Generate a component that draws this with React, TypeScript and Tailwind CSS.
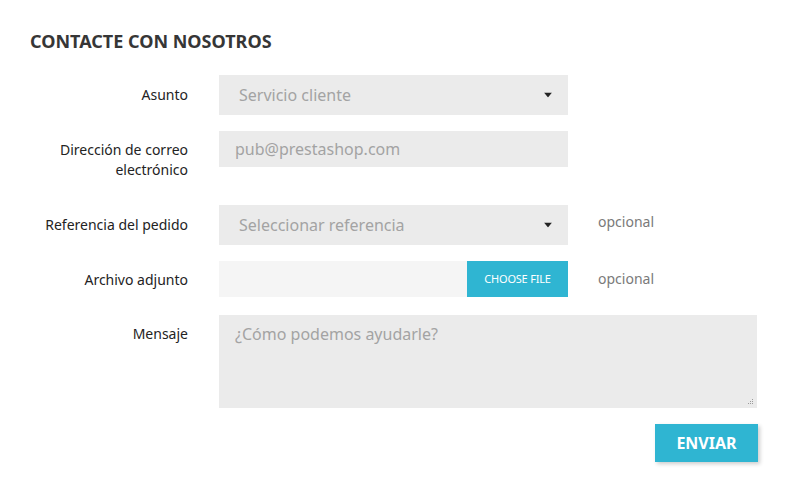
import React from "react";

function Caret() {
  return (
    <svg width="8" height="5" viewBox="0 0 8 5" className="pointer-events-none absolute right-[16px] top-1/2 -translate-y-1/2">
      <path d="M0 0h8L4 5z" fill="#232323" />
    </svg>
  );
}

function Label({ children }: { children: React.ReactNode }) {
  return (
    <label className="w-[158px] shrink-0 py-[9px] text-right text-sm leading-5 text-[#232323]">
      {children}
    </label>
  );
}

export default function App() {
  return (
    <div className="min-h-[493px] bg-white pt-[29px] pl-[30px] font-['Noto_Sans',sans-serif]">
      <h3 className="text-[18px] font-bold leading-6 text-[#363636]">CONTACTE CON NOSOTROS</h3>

      <form className="mt-[22px]">
        <div className="flex items-center gap-[31px]">
          <Label>Asunto</Label>
          <div className="relative w-[349px]">
            <select className="h-10 w-full appearance-none bg-[#ebebeb] pl-[20px] text-base text-[#a3a3a3] outline-none">
              <option>Servicio cliente</option>
            </select>
            <Caret />
          </div>
        </div>

        <div className="mt-4 flex items-start gap-[31px]">
          <Label>
            Dirección de correo
            <br />
            electrónico
          </Label>
          <input
            type="email"
            placeholder="pub@prestashop.com"
            className="h-9 w-[349px] bg-[#ebebeb] px-4 text-base text-[#232323] outline-none placeholder:text-[#a3a3a3]"
          />
        </div>

        <div className="mt-4 flex items-center gap-[31px]">
          <Label>Referencia del pedido</Label>
          <div className="relative w-[349px]">
            <select className="h-10 w-full appearance-none bg-[#ebebeb] pl-[20px] text-base text-[#a3a3a3] outline-none">
              <option>Seleccionar referencia</option>
            </select>
            <Caret />
          </div>
          <span className="-ml-px self-start pt-[7px] text-sm leading-5 text-[#7a7a7a]">opcional</span>
        </div>

        <div className="mt-4 flex items-start gap-[31px]">
          <Label>Archivo adjunto</Label>
          <div className="flex h-9 w-[349px] bg-[#f5f5f5]">
            <div className="flex-1" />
            <button
              type="button"
              className="w-[101px] bg-[#2fb5d2] text-[11px] uppercase tracking-[-0.2px] text-white"
            >
              Choose file
            </button>
          </div>
          <span className="-ml-px pt-[8px] text-sm leading-5 text-[#7a7a7a]">opcional</span>
        </div>

        <div className="mt-4 flex items-start gap-[31px]">
          <Label>Mensaje</Label>
          <div className="relative">
            <textarea
              placeholder="¿Cómo podemos ayudarle?"
              className="block h-[93px] w-[538px] resize-none bg-[#ebebeb] px-4 py-[7px] text-base text-[#232323] outline-none placeholder:text-[#a3a3a3]"
            />
            <svg width="7" height="7" viewBox="0 0 7 7" className="absolute bottom-[2px] right-[3px]">
              <g fill="#9a9a9a">
                <rect x="5" y="0" width="1" height="1" />
                <rect x="3" y="2" width="1" height="1" />
                <rect x="5" y="2" width="1" height="1" />
                <rect x="1" y="4" width="1" height="1" />
                <rect x="3" y="4" width="1" height="1" />
                <rect x="5" y="4" width="1" height="1" />
              </g>
            </svg>
          </div>
        </div>

        <div className="mt-4 flex w-[728px] justify-end">
          <button
            type="submit"
            className="h-[38px] w-[103px] bg-[#2fb5d2] text-base font-bold uppercase text-white shadow-[2px_2px_4px_0_rgba(0,0,0,0.2)]"
          >
            Enviar
          </button>
        </div>
      </form>
    </div>
  );
}
